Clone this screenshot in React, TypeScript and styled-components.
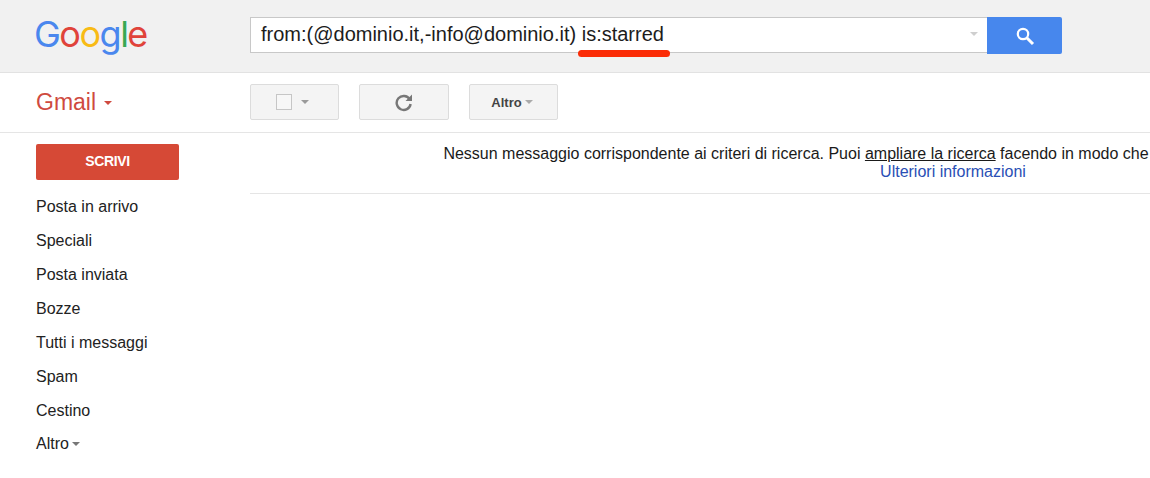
import styled, { createGlobalStyle } from "styled-components";

const GlobalStyle = createGlobalStyle`
  html, body {
    margin: 0;
    padding: 0;
    background: #fff;
    overflow: hidden;
    font-family: "Liberation Sans", Arial, sans-serif;
  }
`;

const Page = styled.div`
  width: 1150px;
  height: 478px;
  overflow: hidden;
`;

const Header = styled.header`
  position: relative;
  display: flex;
  height: 72px;
  background: #f1f1f1;
  border-bottom: 1px solid #e2e2e2;
`;

const Logo = styled.div`
  width: 250px;
  padding: 9px 0 0 34px;
  box-sizing: border-box;
  font-family: Inter, sans-serif;
  font-size: 36px;
  line-height: 50px;
  letter-spacing: -1.5px;
`;

const Letter = styled.span<{ $color: string }>`
  color: ${(p) => p.$color};
`;

const SearchForm = styled.div`
  display: flex;
  margin-top: 17px;
  height: 37px;
`;

const SearchBox = styled.div`
  display: flex;
  align-items: center;
  justify-content: space-between;
  width: 737px;
  height: 36px;
  box-sizing: border-box;
  padding: 0 9px 2px 10px;
  background: #fff;
  border: 1px solid #c8c8c8;
  border-right: none;
  font-size: 20px;
  color: #1c1c1c;
`;

const SearchButton = styled.div`
  display: flex;
  align-items: center;
  justify-content: center;
  width: 75px;
  height: 37px;
  background: #4787ed;
  border-radius: 0 2px 2px 0;
`;

const SmallCaret = styled.span<{ $color?: string; $gap?: number }>`
  display: inline-block;
  width: 0;
  height: 0;
  margin-left: ${(p) => p.$gap ?? 0}px;
  border-left: 4px solid transparent;
  border-right: 4px solid transparent;
  border-top: 4px solid ${(p) => p.$color ?? "#9a9a9a"};
`;

const RedMark = styled.div`
  position: absolute;
  left: 578px;
  top: 50px;
  width: 92px;
  height: 7px;
  background: #fb2c06;
  border-radius: 4px;
`;

const ToolRow = styled.div`
  display: flex;
  align-items: center;
  height: 59px;
  border-bottom: 1px solid #e5e5e5;
`;

const GmailMenu = styled.div`
  display: flex;
  align-items: center;
  gap: 8px;
  width: 214px;
  margin-left: 36px;
  font-size: 23px;
  color: #cf4a3f;
`;

const ToolGroup = styled.div`
  display: flex;
  gap: 20px;
  margin-bottom: 1px;
`;

const ToolButton = styled.div<{ $width: number; $shift?: number }>`
  display: flex;
  align-items: center;
  justify-content: center;
  width: ${(p) => p.$width}px;
  height: 36px;
  box-sizing: border-box;
  padding-right: ${(p) => p.$shift ?? 0}px;
  background: #f4f4f4;
  border: 1px solid #dcdcdc;
  border-radius: 2px;
  font-size: 13px;
  font-weight: bold;
  color: #444;
`;

const CheckBox = styled.span`
  width: 14px;
  height: 14px;
  margin-right: 9px;
  background: #f7f7f7;
  border: 1px solid #c6c6c6;
`;

const Body = styled.div`
  display: flex;
`;

const Sidebar = styled.nav`
  width: 250px;
  flex: none;
  padding: 11px 0 0 36px;
  box-sizing: border-box;
`;

const Compose = styled.div`
  display: flex;
  align-items: center;
  justify-content: center;
  width: 143px;
  height: 36px;
  padding-bottom: 2px;
  box-sizing: border-box;
  background: #d64936;
  border-radius: 2px;
  color: #fff;
  font-size: 14px;
  font-weight: bold;
  letter-spacing: -0.4px;
  margin-bottom: 10px;
`;

const NavItem = styled.div`
  display: flex;
  align-items: center;
  height: 34px;
  font-size: 16px;
  color: #222;

  &:last-child {
    margin-top: -1px;
  }
`;

const Main = styled.main`
  flex: none;
  width: 1406px;
`;

const Notice = styled.div`
  height: 61px;
  box-sizing: border-box;
  padding-top: 12px;
  border-bottom: 1px solid #e5e5e5;
  text-align: center;
  font-size: 16px;
  line-height: 18px;
  color: #1a1a1a;
`;

const NoticeLine = styled.div<{ $trail?: number }>`
  white-space: nowrap;
  padding-right: ${(p) => p.$trail ?? 0}px;
`;

const Widen = styled.span`
  color: #1a1a1a;
  text-decoration: underline;
`;

const MoreLink = styled.a`
  color: #2a4fb5;
`;

const navItems = [
  "Posta in arrivo",
  "Speciali",
  "Posta inviata",
  "Bozze",
  "Tutti i messaggi",
  "Spam",
  "Cestino",
];

const logoLetters = [
  { c: "G", color: "#4a87ee" },
  { c: "o", color: "#e0433a" },
  { c: "o", color: "#f8bb15" },
  { c: "g", color: "#4a87ee" },
  { c: "l", color: "#38a853" },
  { c: "e", color: "#e0433a" },
];

export default function App() {
  return (
    <Page>
      <GlobalStyle />
      <Header>
        <Logo>
          {logoLetters.map((l, i) => (
            <Letter key={i} $color={l.color}>
              {l.c}
            </Letter>
          ))}
        </Logo>
        <SearchForm>
          <SearchBox>
            <span>from:(@dominio.it,-info@dominio.it) is:starred</span>
            <SmallCaret $color="#cfcfcf" />
          </SearchBox>
          <SearchButton>
            <svg width="20" height="20" viewBox="0 0 20 20" fill="none" stroke="#fff">
              <circle cx="8" cy="8" r="5.2" strokeWidth="2.2" />
              <path d="M12 12l6 6" strokeWidth="3" />
            </svg>
          </SearchButton>
        </SearchForm>
        <RedMark />
      </Header>
      <ToolRow>
        <GmailMenu>
          Gmail
          <SmallCaret $color="#cf4a3f" />
        </GmailMenu>
        <ToolGroup>
          <ToolButton $width={89} $shift={4}>
            <CheckBox />
            <SmallCaret $color="#9a9a9a" />
          </ToolButton>
          <ToolButton $width={90}>
            <svg width="20" height="20" viewBox="0 0 20 20" fill="none">
              <path d="M15.6 7.2A7 7 0 1 0 16.6 12" stroke="#777" strokeWidth="2.4" />
              <path d="M18 2.5V9h-6.5z" fill="#777" />
            </svg>
          </ToolButton>
          <ToolButton $width={89} $shift={3}>
            Altro
            <SmallCaret $color="#aaa" $gap={3} />
          </ToolButton>
        </ToolGroup>
      </ToolRow>
      <Body>
        <Sidebar>
          <Compose>SCRIVI</Compose>
          {navItems.map((item) => (
            <NavItem key={item}>{item}</NavItem>
          ))}
          <NavItem>
            Altro
            <SmallCaret $color="#777" $gap={3} />
          </NavItem>
        </Sidebar>
        <Main>
          <Notice>
            <NoticeLine $trail={314}>
              Nessun messaggio corrispondente ai criteri di ricerca. Puoi <Widen>ampliare la ricerca</Widen> facendo in
              modo che
            </NoticeLine>
            <NoticeLine>
              <MoreLink>Ulteriori informazioni</MoreLink>
            </NoticeLine>
          </Notice>
        </Main>
      </Body>
    </Page>
  );
}
